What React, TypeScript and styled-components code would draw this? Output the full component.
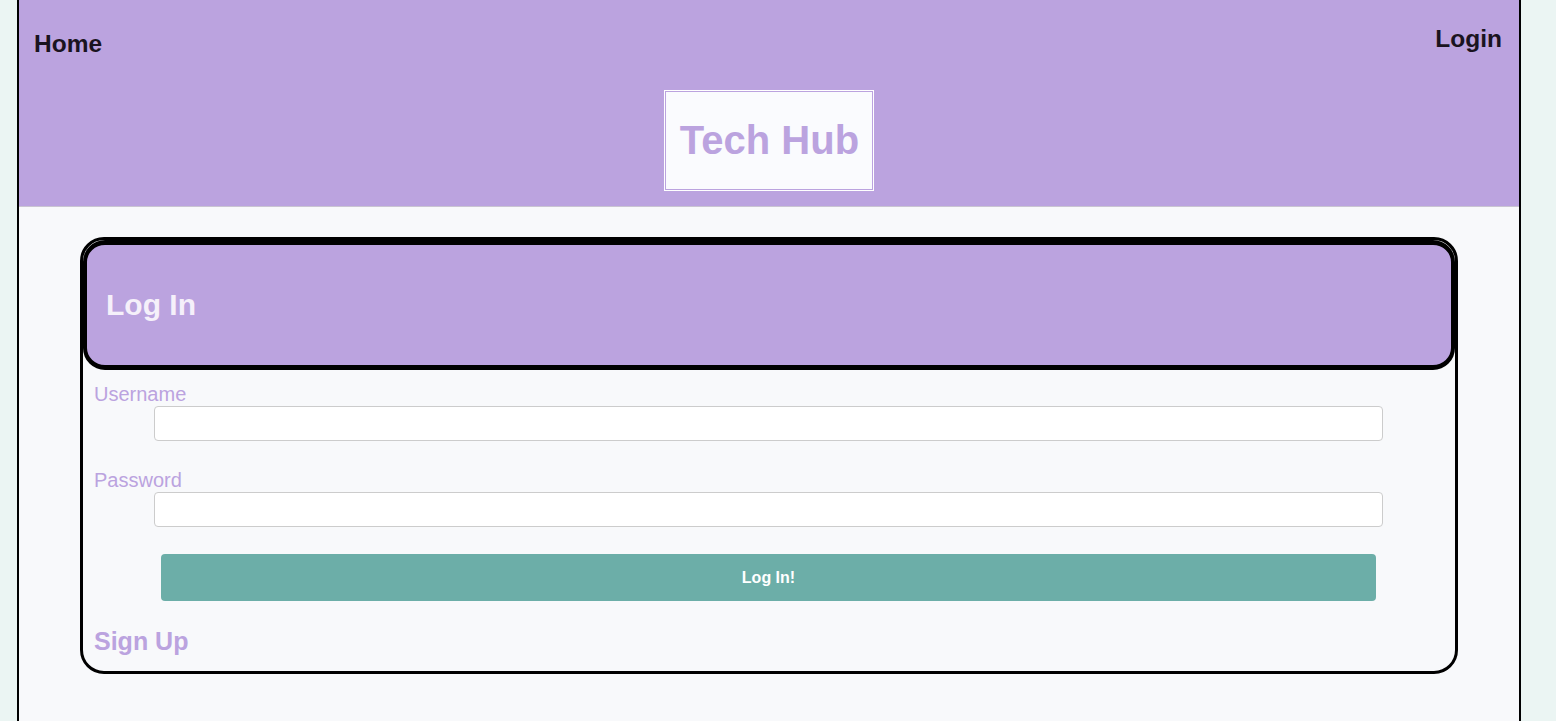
import React from "react";
import styled, { createGlobalStyle } from "styled-components";

const GlobalStyle = createGlobalStyle`
  html, body {
    margin: 0;
    padding: 0;
    background: #ebf5f3;
    font-family: "Liberation Sans", Arial, sans-serif;
  }
  * { box-sizing: border-box; }
`;

const Page = styled.div`
  width: 1504px;
  margin-left: 17px;
  min-height: 721px;
  background: #f8f9fb;
  border-left: 2px solid #000;
  border-right: 2px solid #000;
  display: flex;
  flex-direction: column;
`;

const Header = styled.header`
  background: #bba3df;
  height: 207px;
  display: flex;
  flex-direction: column;
  align-items: center;
  border-bottom: 1px solid #c9c4d2;
`;

const NavRow = styled.nav`
  align-self: stretch;
  display: flex;
  justify-content: space-between;
  align-items: flex-start;
  padding: 25px 17px 0 15px;
`;

const NavLink = styled.a<{ $offset?: number }>`
  font-size: 24.5px;
  line-height: 28px;
  font-weight: bold;
  color: #1a1320;
  text-decoration: none;
  margin-top: ${(p) => p.$offset ?? 0}px;
  cursor: pointer;
`;

const TitleBox = styled.h1`
  margin: 32px 0 0 0;
  padding: 26px 14px 26px 15px;
  background: #fafbfe;
  border: 1px solid #ffffff;
  box-shadow: inset 0 0 0 1px #bba3df;
  color: #bba3df;
  font-size: 40px;
  line-height: 47px;
  font-weight: bold;
`;

const Main = styled.main`
  padding: 30px 61px 49px;
`;

const Card = styled.section`
  border: 3px solid #000;
  border-radius: 24px;
  background: #f8f9fb;
  display: flex;
  flex-direction: column;
  padding-bottom: 15px;
`;

const CardHeader = styled.div`
  background: #bba3df;
  border: 5px solid #000;
  border-left-width: 4px;
  border-right-width: 4px;
  border-radius: 22px;
  height: 130px;
  display: flex;
  align-items: center;
  padding-left: 19px;
`;

const CardTitle = styled.h2`
  margin: 0;
  font-size: 30px;
  line-height: 34px;
  font-weight: bold;
  color: #f5f0fa;
`;

const Form = styled.form`
  display: flex;
  flex-direction: column;
  padding: 13px 11px 0;
`;

const Field = styled.div<{ $gap?: number }>`
  display: flex;
  flex-direction: column;
  margin-top: ${(p) => p.$gap ?? 0}px;
`;

const Label = styled.label`
  font-size: 20px;
  line-height: 23px;
  color: #bba3df;
`;

const Input = styled.input`
  margin: 0 61px 0 60px;
  height: 35px;
  border: 1px solid #cccccc;
  border-radius: 4px;
  background: #ffffff;
  padding: 0 8px;
  font-size: 16px;
  outline: none;
`;

const SubmitButton = styled.button`
  margin: 27px 68px 0 67px;
  height: 47px;
  border: none;
  border-radius: 4px;
  background: #6caea8;
  color: #ffffff;
  font-family: "Liberation Sans", Arial, sans-serif;
  font-size: 16px;
  font-weight: bold;
  cursor: pointer;
`;

const SignUp = styled.a`
  margin-top: 26px;
  font-size: 25px;
  line-height: 29px;
  font-weight: bold;
  color: #bba3df;
  text-decoration: none;
  cursor: pointer;
`;

export default function App() {
  return (
    <>
      <GlobalStyle />
      <Page>
        <Header>
          <NavRow>
            <NavLink $offset={5}>Home</NavLink>
            <NavLink>Login</NavLink>
          </NavRow>
          <TitleBox>Tech Hub</TitleBox>
        </Header>
        <Main>
          <Card>
            <CardHeader>
              <CardTitle>Log In</CardTitle>
            </CardHeader>
            <Form onSubmit={(e) => e.preventDefault()}>
              <Field>
                <Label htmlFor="username">Username</Label>
                <Input id="username" type="text" />
              </Field>
              <Field $gap={28}>
                <Label htmlFor="password">Password</Label>
                <Input id="password" type="password" />
              </Field>
              <SubmitButton type="submit">Log In!</SubmitButton>
              <SignUp>Sign Up</SignUp>
            </Form>
          </Card>
        </Main>
      </Page>
    </>
  );
}
